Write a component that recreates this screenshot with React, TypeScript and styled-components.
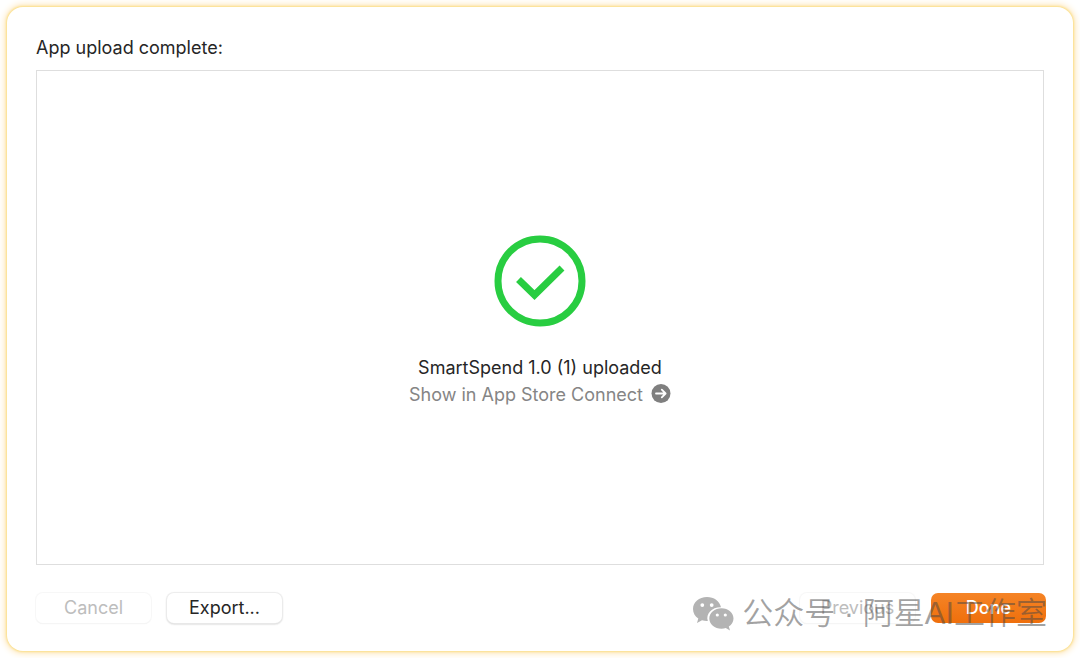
import React from "react";
import styled, { createGlobalStyle, css } from "styled-components";

const GlobalStyle = createGlobalStyle`
  *, *::before, *::after { box-sizing: border-box; }
  body {
    margin: 0;
    background: #fff;
    color: #262626;
    font-family: Inter, "Liberation Sans", sans-serif;
    font-size: 18px;
    line-height: 24px;
  }
`;

const Page = styled.div`
  display: flex;
  min-height: 100vh;
  padding: 7px;
`;

const Dialog = styled.main`
  position: relative;
  flex: 1;
  display: flex;
  flex-direction: column;
  padding: 29px 29px 28px;
  border-radius: 16px;
  background: #fff;
  box-shadow: 0 0 2px 1px #fbe08c, 0 0 7px 2px #fde3b0;
`;

const Title = styled.h1`
  margin: 0 0 10px;
  font-size: 18px;
  font-weight: 400;
  line-height: 24px;
`;

const Panel = styled.section`
  flex: 1;
  display: flex;
  flex-direction: column;
  align-items: center;
  justify-content: center;
  padding-top: 7px;
  border: 1px solid #dedede;
`;

const SuccessIcon = styled.svg`
  width: 92px;
  height: 92px;
  margin-bottom: 27px;
`;

const Status = styled.p`
  margin: 0;
  line-height: 27px;
`;

const StoreLink = styled.a`
  display: flex;
  align-items: center;
  gap: 8px;
  color: #858585;
  line-height: 27px;
  text-decoration: none;
`;

const ArrowIcon = styled.svg`
  width: 20px;
  height: 20px;
`;

const Footer = styled.footer`
  display: flex;
  justify-content: space-between;
  margin: 28px -2px 0 0;
`;

const ButtonGroup = styled.div`
  display: flex;
  gap: 16px;
`;

const Button = styled.button<{ $primary?: boolean }>`
  width: 115px;
  height: 30px;
  padding: 0;
  border: 0;
  border-radius: 7px;
  background: #fff;
  color: #262626;
  font: inherit;
  line-height: 28px;
  box-shadow: 0 0 1px 1px #ebebeb, 0 1px 2px #b5b5b5;

  &:disabled {
    color: #bdbdbd;
    box-shadow: 0 0 1px 1px #f7f7f7, 0 1px 1px #e9e9e9;
  }

  ${({ $primary }) =>
    $primary &&
    css`
      background: linear-gradient(#f58426, #ef6f0c);
      color: #fff;
      font-weight: 500;
      box-shadow: none;
    `}
`;

const Watermark = styled.div`
  position: absolute;
  right: 26px;
  bottom: 15px;
  display: flex;
  align-items: center;
  gap: 8px;
  color: rgba(70, 70, 70, 0.5);
  font-family: "Liberation Sans", "Noto Sans CJK SC", sans-serif;
  font-size: 31px;
  font-weight: 350;
  line-height: 44px;
  white-space: nowrap;
  pointer-events: none;
`;

const WeChatIcon = styled.svg`
  width: 42px;
  height: 36px;
`;

export default function App() {
  return (
    <Page>
      <GlobalStyle />
      <Dialog>
        <Title>App upload complete:</Title>
        <Panel>
          <SuccessIcon viewBox="0 0 92 92" fill="none" stroke="#28cd41" aria-hidden="true">
            <circle cx="46" cy="46" r="42" strokeWidth="7" />
            <path d="M24.500 44.500 40.500 60 68 33" strokeWidth="7" />
          </SuccessIcon>
          <Status>SmartSpend 1.0 (1) uploaded</Status>
          <StoreLink href="#app-store-connect">
            Show in App Store Connect
            <ArrowIcon viewBox="0 0 20 20" fill="none" aria-hidden="true">
              <circle cx="10" cy="9.500" r="9.500" fill="#7f7f7f" />
              <path
                d="M5 9.500h9.500M10.800 5.700l3.800 3.800-3.800 3.800"
                stroke="#fff"
                strokeWidth="1.800"
                strokeLinecap="round"
                strokeLinejoin="round"
              />
            </ArrowIcon>
          </StoreLink>
        </Panel>
        <Footer>
          <ButtonGroup>
            <Button type="button" disabled>Cancel</Button>
            <Button type="button">Export...</Button>
          </ButtonGroup>
          <ButtonGroup>
            <Button type="button" disabled>Previous</Button>
            <Button type="button" $primary>Done</Button>
          </ButtonGroup>
        </Footer>
        <Watermark>
          <WeChatIcon viewBox="0 0 42 36" aria-hidden="true">
            <path
              fill="#b3b3b3"
              fillRule="evenodd"
              d="M15 1C7 1 1 6.300 1 13c0 4 2 7.300 5.300 9.500L5 27l5-2.700c2 .6 4 .8 5.800.7C13.600 17.500 20 11 29 11.200 27.500 5 22 1 15 1ZM10.300 7.200a1.900 1.900 0 1 1 0 3.800 1.900 1.900 0 0 1 0-3.800Zm9.400 0a1.900 1.900 0 1 1 0 3.800 1.900 1.900 0 0 1 0-3.800Z"
            />
            <path
              fill="#b3b3b3"
              fillRule="evenodd"
              d="M29.500 12.200c-6.800 0-12.200 4.600-12.200 10.300s5.400 10.300 12.200 10.300c1.500 0 3-.3 4.300-.7l4.200 2.300-1.200-3.900c3-1.900 4.700-4.700 4.700-8 0-5.700-5.300-10.300-12-10.300Zm-4.200 5.200a1.600 1.600 0 1 1 0 3.200 1.600 1.600 0 0 1 0-3.200Zm8 0a1.600 1.600 0 1 1 0 3.200 1.600 1.600 0 0 1 0-3.200Z"
            />
          </WeChatIcon>
          <span>公众号 · 阿星AI工作室</span>
        </Watermark>
      </Dialog>
    </Page>
  );
}
